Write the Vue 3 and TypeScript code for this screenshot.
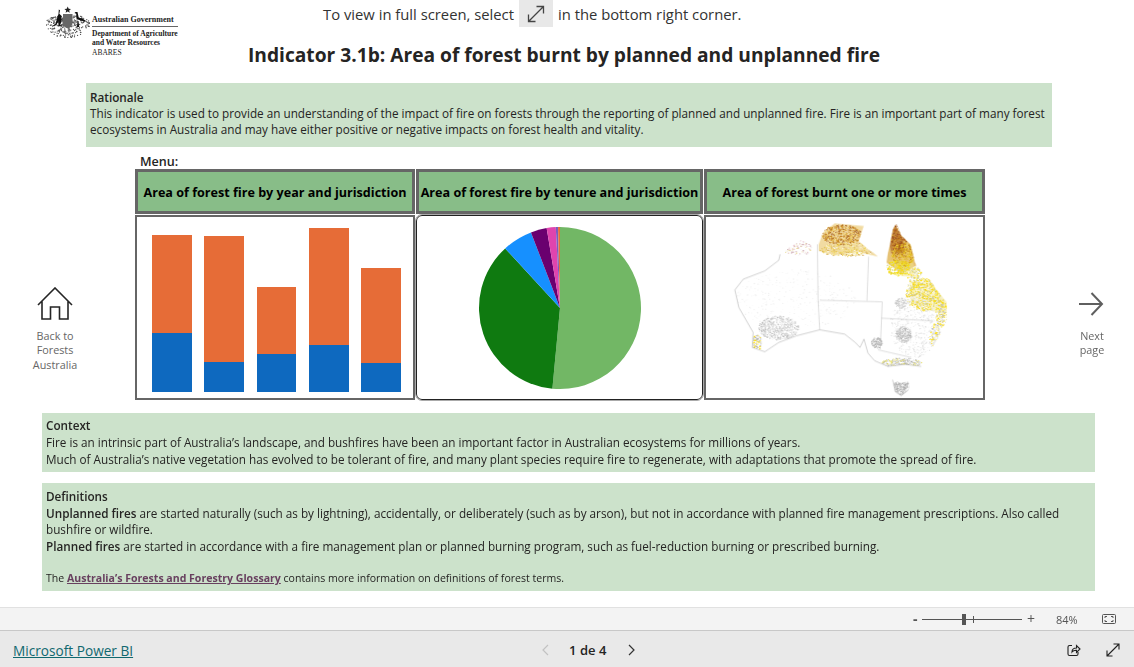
<template>
	<div class="page">
		<div class="report">
			<header class="head">
				<div class="logo">
					<svg class="crest" width="44" height="32" viewBox="0 0 44 32">
						<circle v-for="(d, i) in crestDots" :key="i" :cx="d.x" :cy="d.y" r="0.65" fill="#555" />
						<path d="M21.700 0.600l1 2.200 2.300 .1-1.800 1.500 .6 2.300-2.100-1.200-2.100 1.200 .6-2.300-1.800-1.500 2.300-.1z" fill="#222" />
						<path d="M17 8h9.500v10q-1 3.500-4.700 4.500q-3.800-1-4.800-4.500z" fill="#666" />
						<path d="M12.800 3.500l1.200 .7-.7 3.500 1.900 1.800 .5 6-1.700 3.500 2.600 1.200h-4.300l.4-4.700-3.100 4-3.600 1.100 3.600-3.100 1.700-6 1.200-3.500z" fill="#111" />
						<path d="M29.500 6l-1 1 1.700 .8 .7 5.400 6 1.800 4.200 .7-4.200-3-4.200-1.200-1.200-5.400z" fill="#111" />
						<path d="M31.500 15l-.6 6h2.400l-.8-6z" fill="#111" />
					</svg>
					<div class="logo-text">
						<div class="gov">Australian Government</div>
						<div class="dept">Department of Agriculture</div>
						<div class="dept">and Water Resources</div>
						<div class="abares">ABARES</div>
					</div>
				</div>
				<div class="notice">
					<span>To view in full screen, select</span>
					<span class="notice-icon">
						<svg width="20" height="20" viewBox="0 0 20 20" fill="none" stroke="#444" stroke-width="1.3">
							<path d="M2.500 17.500L17.500 2.500M10.500 2.500h7v7M2.500 10.500v7h7" />
						</svg>
					</span>
					<span>in the bottom right corner.</span>
				</div>
				<h1 class="title">Indicator 3.1b: Area of forest burnt by planned and unplanned fire</h1>
			</header>

			<section class="panel rationale">
				<strong>Rationale</strong><br />
				This indicator is used to provide an understanding of the impact of fire on forests through the reporting of planned and unplanned fire. Fire is an important part of many forest<br />
				ecosystems in Australia and may have either positive or negative impacts on forest health and vitality.
			</section>

			<div class="middle">
				<div class="side side-left">
					<svg width="36" height="33" viewBox="0 0 36 33" fill="none" stroke="#252525" stroke-width="1.6">
						<path d="M1 18L18 1l17 17M5 14v18h8.500V20h9v12H31V14" />
					</svg>
					<div class="side-label">Back to<br />Forests<br />Australia</div>
				</div>

				<div class="menu-wrap">
					<div class="menu-label">Menu:</div>
					<div class="menu">
						<div v-for="h in headers" :key="h" class="menu-head">{{ h }}</div>
						<div class="menu-cell bars">
							<div v-for="(b, i) in bars" :key="i" class="bar">
								<div class="bar-top" :style="{ height: b.orange + 'px' }"></div>
								<div class="bar-low" :style="{ height: b.blue + 'px' }"></div>
							</div>
						</div>
						<div class="menu-cell pie-cell">
							<svg width="164" height="164" viewBox="-82 -82 164 164">
								<path v-for="s in slices" :key="s.color" :d="s.d" :fill="s.color" />
							</svg>
						</div>
						<div class="menu-cell map-cell">
							<svg width="279" height="182" viewBox="15 153 835 547">
								<defs>
									<clipPath id="land">
										<path :d="landPath" />
										<path :d="tasPath" />
									</clipPath>
									<filter id="soft" x="0" y="0" width="100%" height="100%">
										<feGaussianBlur stdDeviation="1.8" />
									</filter>
								</defs>
								<g filter="url(#soft)">
									<g clip-path="url(#land)">
										<path d="M352 235L365 200 400 172 490 180 475 225 505 250 530 272 470 258 400 268 352 255Z" fill="#e6bd55" opacity="0.55" />
										<path d="M578 170L600 205 632 235 645 300 600 322 556 290 562 240Z" fill="#d9a22c" opacity="0.65" />
										<path d="M578 170L600 210 612 262 570 262 562 225Z" fill="#a85c1e" opacity="0.6" />
										<path d="M625 345L685 340 740 410 735 445 680 432 630 412Z" fill="#f2e38a" opacity="0.5" />
										<path d="M560 285L635 290 650 335 600 330Z" fill="#f0e28a" opacity="0.55" />
										<rect v-for="(d, i) in mapDots" :key="i" :x="d.x" :y="d.y" :width="d.s" :height="d.s" :fill="d.c" />
									</g>
								</g>
								<path :d="coastPath" fill="none" stroke="#8a8a8a" stroke-width="1.200" />
								<path d="M348 235l2 165 5 92M502 272l-5 133M355 403l188 5-6 142M540 457l155 8M530 552l95 22" fill="none" stroke="#bdbdbd" stroke-width="1.500" />
							</svg>
						</div>
					</div>
				</div>

				<div class="side side-right">
					<svg width="26" height="24" viewBox="0 0 26 24" fill="none" stroke="#5f5f5f" stroke-width="2">
						<path d="M0 12h23M12.500 1L23 12 12.500 23" />
					</svg>
					<div class="side-label">Next<br />page</div>
				</div>
			</div>

			<section class="panel context">
				<strong>Context</strong><br />
				Fire is an intrinsic part of Australia’s landscape, and bushfires have been an important factor in Australian ecosystems for millions of years.<br />
				Much of Australia’s native vegetation has evolved to be tolerant of fire, and many plant species require fire to regenerate, with adaptations that promote the spread of fire.
			</section>

			<section class="panel definitions">
				<strong>Definitions</strong><br />
				<strong>Unplanned fires</strong> are started naturally (such as by lightning), accidentally, or deliberately (such as by arson), but not in accordance with planned fire management prescriptions. Also called<br />
				bushfire or wildfire.<br />
				<strong>Planned fires</strong> are started in accordance with a fire management plan or planned burning program, such as fuel-reduction burning or prescribed burning.
				<p class="glossary">The <a class="glossary-link">Australia’s Forests and Forestry Glossary</a> contains more information on definitions of forest terms.</p>
			</section>
		</div>

		<div class="zoombar">
			<span class="zoom-sign">-</span>
			<div class="slider">
				<span class="slider-tick"></span>
				<span class="slider-thumb"></span>
			</div>
			<span class="zoom-sign plus">+</span>
			<span class="zoom-value">84%</span>
			<svg width="14" height="10" viewBox="0 0 14 10" fill="none" stroke="#555" stroke-width="1">
				<rect x="0.500" y="0.500" width="13" height="9" rx="1" />
				<path d="M3 4V2.500h2M9 2.500h2V4M11 6v1.500H9M5 7.500H3V6" />
			</svg>
		</div>

		<footer class="footer">
			<a class="brand">Microsoft Power BI</a>
			<div class="pager">
				<svg width="8" height="12" viewBox="0 0 8 12" fill="none" stroke="#c2c2c2" stroke-width="1.200"><path d="M7 1L2 6l5 5" /></svg>
				<span class="pager-text">1 de 4</span>
				<svg width="8" height="12" viewBox="0 0 8 12" fill="none" stroke="#333" stroke-width="1.200"><path d="M1 1l5 5-5 5" /></svg>
			</div>
			<div class="foot-icons">
				<svg width="14" height="14" viewBox="0 0 14 14" fill="none" stroke="#222" stroke-width="1.100">
					<path d="M5 2.500H2.500q-1.500 0-1.500 1.500v7q0 1.500 1.500 1.500h7q1.500 0 1.500-1.500V9" />
					<path d="M5 9q0-4 4.500-4V2.500L13 6 9.500 9.500V7.200Q6.500 7 5 9z" />
				</svg>
				<svg width="14" height="14" viewBox="0 0 14 14" fill="none" stroke="#222" stroke-width="1.100">
					<path d="M1 13L13 1M7.500 1H13v5.500M1 7.500V13h5.500" />
				</svg>
			</div>
		</footer>
	</div>
</template>

<script setup lang="ts">
interface Dot {
	x: number;
	y: number;
	s: number;
	c: string;
}

const headers = [
	'Area of forest fire by year and jurisdiction',
	'Area of forest fire by tenure and jurisdiction',
	'Area of forest burnt one or more times',
];

const bars = [
	{ orange: 98, blue: 59 },
	{ orange: 126, blue: 30 },
	{ orange: 67, blue: 38 },
	{ orange: 117, blue: 47 },
	{ orange: 95, blue: 29 },
];

const pieData = [
	{ to: 185.4, color: '#72b765' },
	{ to: 317.4, color: '#0f7a10' },
	{ to: 339, color: '#1690ff' },
	{ to: 350.5, color: '#6a006f' },
	{ to: 357, color: '#e044ae' },
	{ to: 358.6, color: '#7b5cc0' },
	{ to: 360, color: '#e5703a' },
];

function polar(deg: number, r: number): string {
	const a = (deg * Math.PI) / 180;
	return `${(Math.sin(a) * r).toFixed(2)} ${(-Math.cos(a) * r).toFixed(2)}`;
}

const slices = pieData.map((p, i) => {
	const from = i === 0 ? 0 : pieData[i - 1].to;
	const large = p.to - from > 180 ? 1 : 0;
	return { color: p.color, d: `M0 0L${polar(from, 81)}A81 81 0 ${large} 1 ${polar(p.to, 81)}Z` };
});

// the map's coast, in viewBox units
const landPath =
	'M100 372L125 340 190 315 232 283 236 265 270 240 310 215 347 235 358 208 372 178 400 172 488 178 472 225 500 250 528 268 552 282 565 240 575 190 585 172 600 208 628 235 642 290 680 330 705 370 738 410 738 460 716 510 690 550 660 602 612 596 560 602 520 585 500 562 488 520 476 545 462 530 430 505 355 492 285 510 232 530 190 558 152 545 155 500 112 425Z';
const tasPath = 'M574 642L600 652 626 645 622 672 600 690 582 678Z';
const coastPath =
	'M100 372L125 340 190 315 232 283 236 265M155 500L112 425 100 372M152 545L155 500M152 545L190 558 232 530 285 510 355 492 430 505 462 530 476 545 488 520 500 562 520 585 560 602 612 596 660 602M574 642L582 678 600 690 622 672';

// small seeded generator so the scatter stays the same on every load
let seed = 4711;
function rnd(): number {
	seed = (seed * 16807) % 2147483647;
	return seed / 2147483647;
}

const crestDots = Array.from({ length: 300 }, () => {
	const a = rnd() * Math.PI * 2;
	const r = Math.sqrt(rnd());
	return { x: 22 + Math.cos(a) * r * 22, y: 17 + Math.sin(a) * r * 15 * (Math.sin(a) < 0 ? 0.55 : 1) };
});

// patches of burnt area, in the coordinates of the map's viewBox
const patches = [
	{ x: 420, y: 205, rx: 60, ry: 30, n: 520, c: ['#c8861a', '#b06a20', '#d9a030', '#a86a3a', '#f0d060'] },
	{ x: 440, y: 250, rx: 85, ry: 22, n: 350, c: ['#f2d85a', '#e8c840', '#c89a40', '#f7ec9a', '#ffffff'] },
	{ x: 590, y: 215, rx: 24, ry: 42, n: 360, c: ['#a8541a', '#c07a1a', '#8e4a20', '#d9a030'] },
	{ x: 605, y: 265, rx: 36, ry: 36, n: 420, c: ['#d8a018', '#e0bc20', '#b87c1c', '#f0d840'] },
	{ x: 590, y: 305, rx: 36, ry: 24, n: 300, c: ['#f3e21c', '#e8d020', '#d8d8a0', '#ffe000'] },
	{ x: 665, y: 385, rx: 52, ry: 50, n: 700, c: ['#ffe000', '#f3d010', '#e8d840', '#c8c8a0', '#ffffff'] },
	{ x: 640, y: 340, rx: 24, ry: 38, n: 160, c: ['#ffe000', '#d0d0a0', '#ffffff'] },
	{ x: 720, y: 440, rx: 18, ry: 42, n: 180, c: ['#e8d860', '#bbb', '#ffe000'] },
	{ x: 700, y: 510, rx: 16, ry: 38, n: 130, c: ['#ffe000', '#bbb', '#ddd'] },
	{ x: 285, y: 245, rx: 45, ry: 24, n: 120, c: ['#e8c8d0', '#c8a0a8', '#e8d890', '#f2f2f2'] },
	{ x: 165, y: 530, rx: 14, ry: 26, n: 90, c: ['#ffe000', '#aaa', '#ccc'] },
	{ x: 230, y: 485, rx: 60, ry: 36, n: 620, c: ['#b8b8b8', '#c8c8c8', '#d8d8d8', '#e8e8e8'] },
	{ x: 605, y: 505, rx: 24, ry: 24, n: 260, c: ['#b0b0b0', '#c0c0c0', '#d0d0d0'] },
	{ x: 598, y: 410, rx: 18, ry: 16, n: 90, c: ['#c0c0c0', '#d0d0d0'] },
	{ x: 600, y: 590, rx: 60, ry: 15, n: 280, c: ['#b0b0b0', '#c8c8c8', '#e8e060', '#ddd'] },
	{ x: 525, y: 530, rx: 16, ry: 16, n: 110, c: ['#b0b0b0', '#c0c0c0'] },
	{ x: 600, y: 665, rx: 26, ry: 25, n: 320, c: ['#a8a8a8', '#c0c0c0', '#d0d0d0'] },
	{ x: 640, y: 480, rx: 75, ry: 95, n: 500, c: ['#e6e6e6', '#dcdcdc', '#f0f0f0'] },
	{ x: 280, y: 400, rx: 180, ry: 90, n: 350, c: ['#f4f4f4', '#efefef'] },
];

const mapDots: Dot[] = [];
for (const p of patches) {
	for (let i = 0; i < p.n; i++) {
		const a = rnd() * Math.PI * 2;
		const r = Math.sqrt(rnd());
		mapDots.push({
			x: p.x + Math.cos(a) * r * p.rx,
			y: p.y + Math.sin(a) * r * p.ry,
			s: 1.500 + rnd() * 2.500,
			c: p.c[Math.floor(rnd() * p.c.length)],
		});
	}
}
</script>

<style>
html,
body {
	overflow: hidden;
	background: #fff;
}
</style>

<style scoped>
.page {
	width: 1134px;
	height: 667px;
	display: flex;
	flex-direction: column;
	font-family: "Open Sans", "Noto Sans", sans-serif;
	color: #252423;
}

.report {
	height: 607px;
	flex-shrink: 0;
}

.head {
	height: 83px;
	display: grid;
	grid-template-columns: 248px 1fr;
	grid-template-rows: 27px auto;
}

.logo {
	grid-row: 1 / 3;
	display: flex;
	gap: 2px;
	padding: 6px 0 0 46px;
}

.logo-text {
	font-family: "Liberation Serif", serif;
	font-size: 7.500px;
	line-height: 9px;
	color: #222;
	padding-top: 8.500px;
	white-space: nowrap;
}

.gov {
	font-size: 8px;
	font-weight: bold;
	width: 86px;
	border-bottom: 1px solid #666;
	padding-bottom: 2px;
	margin-bottom: 2px;
}

.dept {
	font-weight: bold;
}

.abares {
	margin-top: 1px;
	font-size: 7.500px;
}

.notice {
	display: flex;
	align-items: center;
	margin-left: 75px;
	font-size: 14.800px;
	color: #333;
	white-space: nowrap;
}

.notice-icon {
	width: 34px;
	height: 27px;
	margin: 0 5px;
	background: #e8e8e8;
	display: flex;
	align-items: center;
	justify-content: center;
}

.title {
	margin: 15px 0 0;
	font-size: 19.180px;
	line-height: 26px;
	font-weight: 700;
	color: #252423;
	white-space: nowrap;
}

.panel {
	background: #cce2cb;
	font-size: 11.720px;
	color: #252423;
	white-space: nowrap;
}

.panel strong {
	font-weight: 600;
}

.rationale {
	height: 64px;
	margin: 0 82px 0 86px;
	padding: 6px 0 0 4px;
	box-sizing: border-box;
	line-height: 16px;
}

.middle {
	display: flex;
	height: 266px;
	padding-top: 7px;
	box-sizing: border-box;
}

.side {
	display: flex;
	flex-direction: column;
	align-items: center;
	box-sizing: border-box;
	padding-top: 133px;
}

.side-left {
	width: 110px;
	margin-right: 25px;
}

.side-right {
	width: 84px;
	margin-left: 65px;
	padding-top: 138px;
}

.side-label {
	font-size: 10.800px;
	line-height: 14.300px;
	color: #666;
	text-align: center;
}

.side-left .side-label {
	margin-top: 9px;
}

.side-right .side-label {
	margin-top: 13px;
}

.menu-wrap {
	width: 850px;
	flex-shrink: 0;
}

.menu-label {
	height: 15px;
	margin-left: 5px;
	font-size: 12.600px;
	line-height: 15px;
	font-weight: 600;
}

.menu {
	display: grid;
	grid-template-columns: 280px 287px 281px;
	grid-template-rows: 45px 185px;
	column-gap: 1px;
	row-gap: 1px;
}

.menu-head {
	background: #88bd88;
	border: 3px solid #666;
	padding-top: 1px;
	box-sizing: border-box;
	display: flex;
	align-items: center;
	justify-content: center;
	font-size: 12.600px;
	font-weight: 700;
	color: #000;
	white-space: nowrap;
}

.menu-cell {
	box-sizing: border-box;
	background: #fff;
}

.bars {
	border: 2px solid #666;
	display: flex;
	align-items: flex-end;
	gap: 12.400px;
	padding: 0 12px 6px 15px;
}

.bar {
	width: 40px;
}

.bar-top {
	background: #e66c37;
}

.bar-low {
	background: #0e69bf;
}

.pie-cell {
	border: 1px solid #222;
	border-radius: 6px;
	display: flex;
	align-items: center;
	justify-content: center;
	outline: 1px solid #aaa;
}

.map-cell {
	border: 2px solid #666;
	overflow: hidden;
	line-height: 0;
}

.context {
	height: 59px;
	margin: 0 39px 0 42px;
	padding: 4px 0 0 4px;
	box-sizing: border-box;
	line-height: 17px;
}

.definitions {
	height: 108px;
	margin: 11px 39px 0 42px;
	padding: 5px 0 0 4px;
	box-sizing: border-box;
	line-height: 16.700px;
}

.glossary {
	margin: 15px 0 0;
	font-size: 10.550px;
}

.glossary-link {
	color: #68405f;
	font-weight: 700;
	text-decoration: underline;
}

.zoombar {
	height: 24px;
	box-sizing: border-box;
	background: #f3f3f3;
	border-top: 1px solid #e1e1e1;
	border-bottom: 1px solid #c8c8c8;
	display: flex;
	align-items: center;
	padding-left: 913px;
	font-size: 11px;
	color: #555;
}

.zoom-sign {
	font-size: 14px;
	font-weight: 700;
	line-height: 14px;
	width: 9px;
}

.zoom-sign.plus {
	font-weight: 400;
	margin-left: 5px;
	width: 12px;
}

.slider {
	position: relative;
	width: 100px;
	height: 1px;
	background: #555;
}

.slider-thumb {
	position: absolute;
	left: 40px;
	top: -5px;
	width: 4px;
	height: 11px;
	background: #555;
}

.slider-tick {
	position: absolute;
	left: 51px;
	top: -3px;
	width: 1px;
	height: 7px;
	background: #555;
}

.zoom-value {
	margin: 0 24px 0 17px;
}

.footer {
	flex: 1;
	background: #e9e9e9;
	display: flex;
	align-items: center;
	padding: 1px 14px 0 13px;
}

.brand {
	margin-top: 2px;
	font-size: 13.650px;
	color: #10686f;
	text-decoration: underline;
}

.pager {
	display: flex;
	align-items: center;
	margin-left: 408px;
}

.pager-text {
	margin: 0 22px 0 20px;
	font-size: 13px;
	font-weight: 600;
	color: #252423;
}

.foot-icons {
	margin-left: auto;
	display: flex;
	gap: 25px;
}
</style>
